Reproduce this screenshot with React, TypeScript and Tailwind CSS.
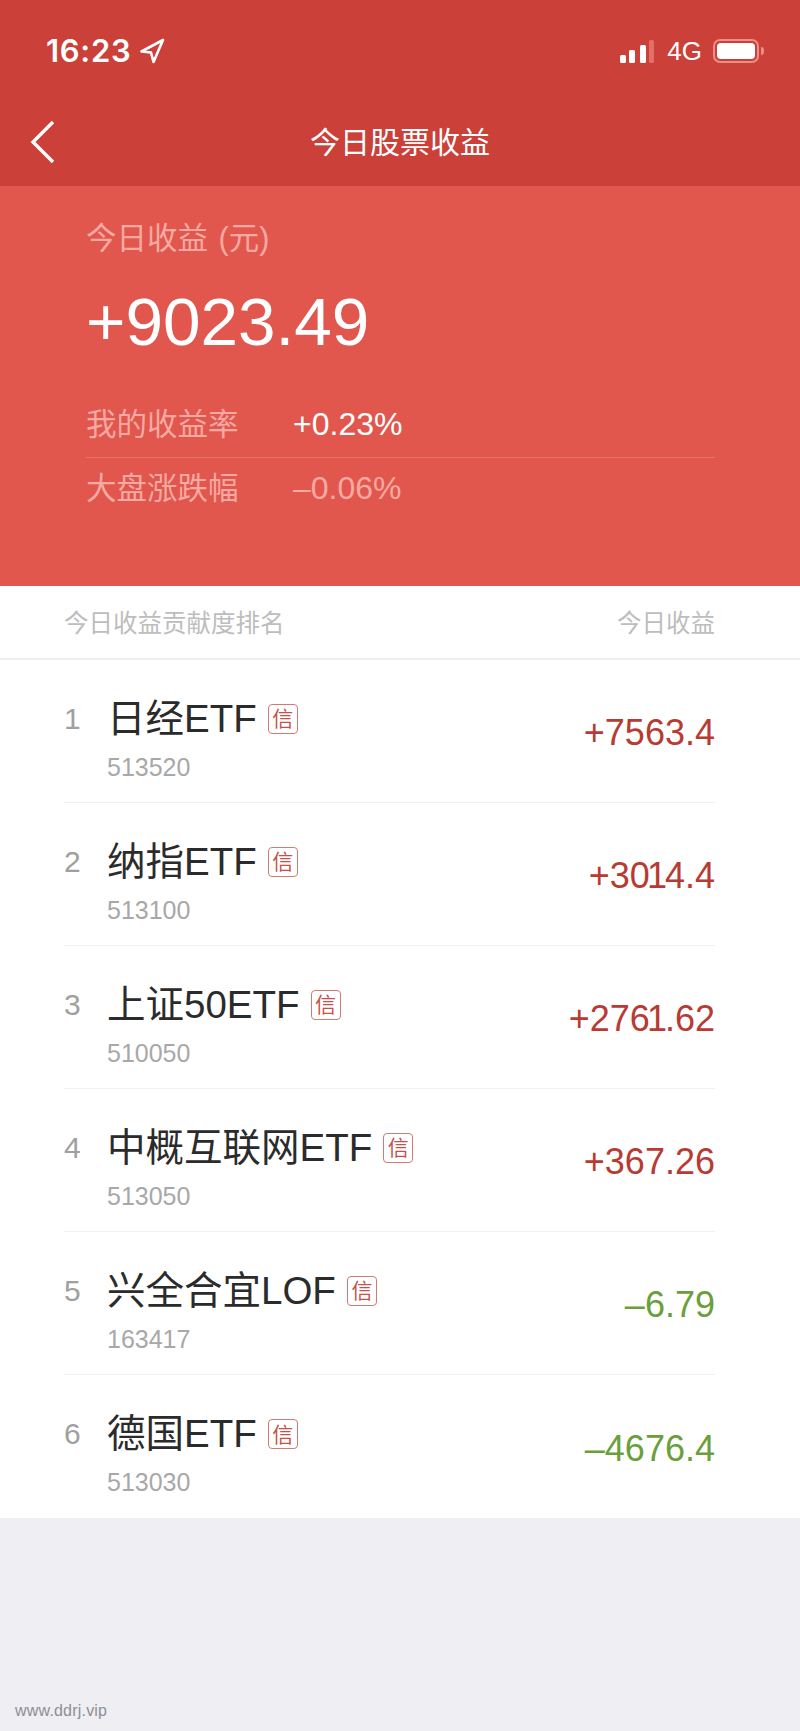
const FONT = 'font-["Liberation_Sans","Noto_Sans_CJK_SC",sans-serif]';

type Stock = { rank: number; name: string; code: string; profit: string };

const stocks: Stock[] = [
  { rank: 1, name: '日经ETF', code: '513520', profit: '+7563.4' },
  { rank: 2, name: '纳指ETF', code: '513100', profit: '+3014.4' },
  { rank: 3, name: '上证50ETF', code: '510050', profit: '+2761.62' },
  { rank: 4, name: '中概互联网ETF', code: '513050', profit: '+367.26' },
  { rank: 5, name: '兴全合宜LOF', code: '163417', profit: '–6.79' },
  { rank: 6, name: '德国ETF', code: '513030', profit: '–4676.4' },
];

const StatusBar = () => (
  <div className="flex items-center justify-between h-[38px] mt-[32px] pl-[46px] pr-[36px] text-white">
    <div className="flex items-center gap-[8px]">
      <span className="font-['Inter'] text-[31px] leading-[38px] font-semibold tracking-[0.7px]">16:23</span>
      <svg width="26" height="26" viewBox="0 0 26 26" fill="none" stroke="white" strokeWidth="2.6" strokeLinejoin="round">
        <path d="M24 2 2.5 13.5 12 14.5 14.5 24z" />
      </svg>
    </div>
    <div className="flex items-center">
      <svg width="35" height="23" viewBox="0 0 35 23" fill="white">
        <rect x="0" y="15" width="6" height="8" rx="1.5" />
        <rect x="9" y="10" width="6" height="13" rx="1.5" />
        <rect x="20" y="5" width="6" height="18" rx="1.5" />
        <rect x="29" y="0" width="5" height="23" rx="1.5" fill="#e36f66" />
      </svg>
      <span className="ml-[12px] text-[26px] leading-[30px]">4G</span>
      <div className="ml-[11px] flex items-center">
        <div className="w-[46px] h-[24px] rounded-[7px] border-2 border-[#ea8f88] p-[2px]">
          <div className="w-full h-full rounded-[4px] bg-white" />
        </div>
        <div className="ml-[2px] w-[3px] h-[8px] rounded-r-full bg-[#ea8f88]" />
      </div>
    </div>
  </div>
);

const NavBar = () => (
  <div className="relative flex items-center justify-center h-[50px] mt-[48px]">
    <svg className="absolute left-[28px] top-[1px]" width="28" height="46" viewBox="0 0 28 46" fill="none" stroke="white" strokeWidth="3.4">
      <path d="M25 3 5 23l20 20" />
    </svg>
    <span className="text-[30px] leading-[40px] text-white">今日股票收益</span>
  </div>
);

const SummaryRow = ({ label, value, dim, line }: { label: string; value: string; dim?: boolean; line?: boolean }) => (
  <div className={line ? 'flex items-center h-[63px] pb-[4px] border-b border-[#e8746b]' : 'flex items-center h-[60px]'}>
    <span className="w-[207px] text-[30.5px] leading-[40px] text-[#f6a9a3]">{label}</span>
    <span className={dim ? 'text-[32px] leading-[40px] text-[#f6a9a3]' : 'text-[32px] leading-[40px] text-white'}>{value}</span>
  </div>
);

// the "1" is narrower in the screenshot's font than in Liberation Sans
const ProfitText = ({ text }: { text: string }) => (
  <>
    {text.split('').map((ch, i) =>
      ch === '1' ? (
        <span key={i} className="-ml-[3px] tracking-[-2px]">1</span>
      ) : (
        <span key={i}>{ch}</span>
      ),
    )}
  </>
);

const StockRow = ({ stock, last }: { stock: Stock; last: boolean }) => {
  const isUp = stock.profit.startsWith('+');
  return (
    <div className={last ? 'flex items-center justify-between h-[143px]' : 'flex items-center justify-between h-[143px] border-b border-[#f0f0f0]'}>
      <div className="flex items-start pt-[16px]">
        <span className="w-[43px] text-[30px] leading-[44px] text-[#a0a0a0]">{stock.rank}</span>
        <div>
          <div className="flex items-center">
            <span className="text-[38.5px] leading-[44px] text-[#2b2b2b]">{stock.name}</span>
            <span className="flex items-center justify-center ml-[11px] w-[30px] h-[30px] rounded-[4px] border border-[#d37a74] text-[21px] leading-none text-[#c4524b]">信</span>
          </div>
          <div className="mt-[11px] text-[25px] leading-[30px] text-[#a8a8a8]">{stock.code}</div>
        </div>
      </div>
      <span className={isUp ? 'pt-[4px] text-[36px] leading-[44px] text-[#b73b32]' : 'pt-[4px] text-[36px] leading-[44px] text-[#6a9f3c]'}>
        <ProfitText text={stock.profit} />
      </span>
    </div>
  );
};

export default function App() {
  return (
    <div className={`flex flex-col w-[800px] h-[1731px] bg-[#eeeef3] ${FONT}`}>
      <header className="h-[186px] shrink-0 overflow-hidden bg-[#cb4038]">
        <StatusBar />
        <NavBar />
      </header>

      <section className="h-[400px] shrink-0 pt-[32px] pl-[86px] pr-[85px] bg-[#e1574d]">
        <div className="text-[30.5px] leading-[40px] text-[#f6a9a3]">
          今日收益 <span className="ml-[2px]">(元)</span>
        </div>
        <div className="mt-[24px] h-[80px] text-[67.5px] leading-[80px] text-white">+9023.49</div>
        <div className="mt-[33px]">
          <SummaryRow label="我的收益率" value="+0.23%" line />
          <SummaryRow label="大盘涨跌幅" value="–0.06%" dim />
        </div>
      </section>

      <div className="flex items-center justify-between h-[74px] shrink-0 pt-[3px] pl-[64px] pr-[85px] bg-white border-b-2 border-[#eeeeee] text-[24.5px] leading-[34px] text-[#bdbdbd]">
        <span>今日收益贡献度排名</span>
        <span>今日收益</span>
      </div>

      <div className="shrink-0 pl-[64px] pr-[85px] bg-white">
        {stocks.map((stock, i) => (
          <StockRow key={stock.code} stock={stock} last={i === stocks.length - 1} />
        ))}
      </div>

      <div className="flex flex-1 items-end pl-[15px] pb-[10px]">
        <span className="text-[16px] leading-[20px] tracking-[0.2px] text-[#8e8e93]">www.ddrj.vip</span>
      </div>
    </div>
  );
}
